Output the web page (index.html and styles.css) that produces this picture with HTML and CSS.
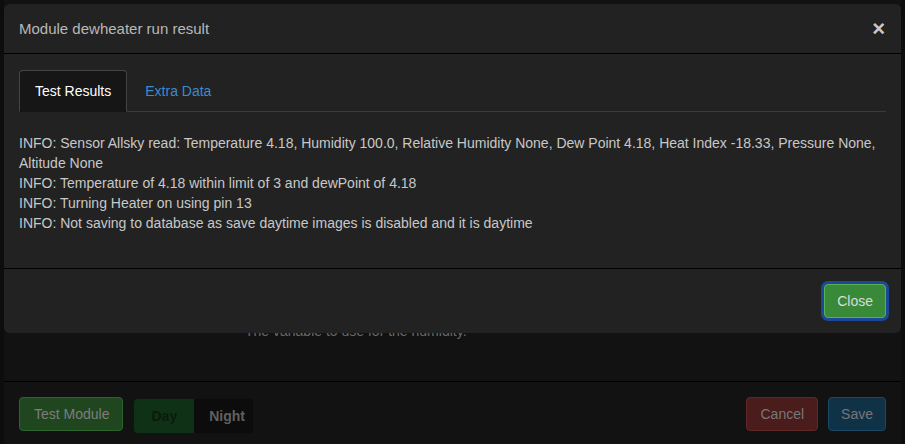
FILE: index.html
```html
<!DOCTYPE html>
<html>
<head>
	<title>Module dewheater</title>
	<link rel="stylesheet" href="styles.css">
</head>
<body>
	<!-- module settings dialog, dimmed behind the result popup -->
	<div class="page">
		<div class="settings">
			<div class="settings-body">
				<p class="help">The variable to use for the humidity.</p>
			</div>
			<div class="settings-footer">
				<div class="footer-left">
					<button class="btn btn-test">Test Module</button>
					<div class="daynight">
						<span class="day">Day</span>
						<span class="night">Night</span>
					</div>
				</div>
				<div class="footer-right">
					<button class="btn btn-cancel">Cancel</button>
					<button class="btn btn-save">Save</button>
				</div>
			</div>
		</div>
	</div>

	<!-- run result popup -->
	<div class="modal">
		<div class="modal-header">
			<span class="modal-title">Module dewheater run result</span>
			<span class="close">&times;</span>
		</div>
		<div class="modal-body">
			<ul class="tabs">
				<li class="tab active">Test Results</li>
				<li class="tab"><a href="#">Extra Data</a></li>
			</ul>
			<div class="tab-content">
				INFO: Sensor Allsky read: Temperature 4.18, Humidity 100.0, Relative Humidity None, Dew Point 4.18, Heat Index -18.33, Pressure None, Altitude None<br>
				INFO: Temperature of 4.18 within limit of 3 and dewPoint of 4.18<br>
				INFO: Turning Heater on using pin 13<br>
				INFO: Not saving to database as save daytime images is disabled and it is daytime
			</div>
		</div>
		<div class="modal-footer">
			<button class="btn btn-close">Close</button>
		</div>
	</div>
</body>
</html>
```

FILE: styles.css
```css
body {
	margin: 0;
	height: 444px;
	overflow: hidden;
	background-color: #0d0d0d;
	font-family: "Liberation Sans", Arial, sans-serif;
	font-size: 14px;
	line-height: 20px;
}

/* background dialog */
.page {
	padding: 0 4px;
}
.settings {
	background-color: #121212;
}
.settings-body {
	height: 381px;
	box-sizing: border-box;
	padding: 321px 0 0 241px;
}
.help {
	margin: 0;
	color: #6a6a6a;
}
.settings-footer {
	display: flex;
	justify-content: space-between;
	border-top: 1px solid #000;
	padding: 15px;
}
.footer-left, .footer-right {
	display: flex;
	align-items: flex-start;
	gap: 10px;
}
.footer-left {
	gap: 11px;
}
.btn {
	font-family: inherit;
	font-size: 14px;
	line-height: 20px;
	padding: 6px 12px;
	border: 1px solid transparent;
	border-radius: 4px;
	cursor: pointer;
}
.btn-test {
	background-color: #1f461f;
	border-color: #2d652d;
	color: #7d7d7d;
	padding: 6px 13px 6px 14px;
}
.daynight {
	display: flex;
	margin-top: 2px;
	border-radius: 4px;
	overflow: hidden;
	font-weight: bold;
	height: 34px;
	line-height: 34px;
}
.daynight .day {
	background-color: #0f3216;
	color: #0a1c0c;
	padding: 0 17px;
}
.daynight .night {
	background-color: #0c0c0c;
	color: #606060;
	padding: 0 8px 0 15px;
}
.btn-cancel {
	background-color: #4a1c1c;
	border-color: #622828;
	color: #777;
	padding: 6px 13px;
}
.btn-save {
	background-color: #0f3247;
	border-color: #1b4865;
	color: #777;
}

/* result popup */
.modal {
	position: absolute;
	top: 4px;
	left: 4px;
	width: 897px;
	background-color: #222;
	border-radius: 6px;
	color: #c8c8c8;
}
.modal-header {
	display: flex;
	justify-content: space-between;
	align-items: center;
	padding: 15px 15px 14px;
	border-bottom: 1px solid #000;
}
.modal-title {
	color: #b8b8b8;
	font-size: 15px;
}
.close {
	font-size: 22px;
	font-weight: bold;
	color: #c8c8c8;
	line-height: 20px;
	margin-right: 1px;
}
.modal-body {
	padding: 16px 15px 15px;
}
.tabs {
	display: flex;
	gap: 2px;
	list-style: none;
	margin: 0;
	padding: 0;
	border-bottom: 1px solid #3c3c3c;
}
.tab {
	padding: 10px 15px;
	border: 1px solid transparent;
	border-radius: 4px 4px 0 0;
	margin-bottom: -1px;
}
.tab.active {
	background-color: #161616;
	border-color: #444 #444 transparent;
	color: #fff;
}
.tab a {
	color: #3b8ad0;
	text-decoration: none;
}
.tab-content {
	padding: 21px 0 20px;
}
.modal-footer {
	display: flex;
	justify-content: flex-end;
	padding: 15px;
	border-top: 1px solid #000;
}
.btn-close {
	background-color: #388a38;
	border-color: #58b058;
	color: #dcdcdc;
	box-shadow: 0 0 0 3px #1d4797;
}
```
